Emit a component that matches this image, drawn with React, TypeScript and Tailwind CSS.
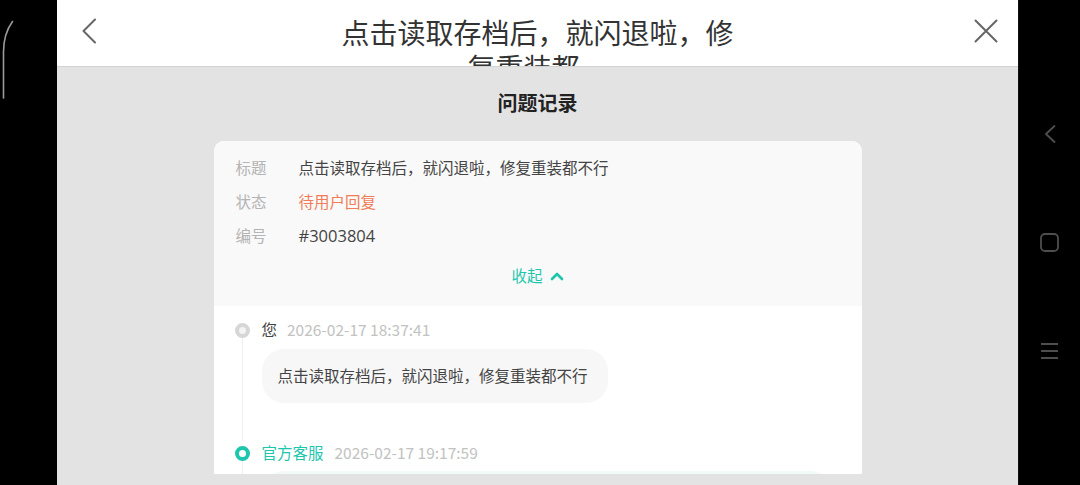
const font = { fontFamily: '"Noto Sans CJK SC", "Noto Sans", sans-serif' }

function BackIcon() {
  return (
    <svg width="16" height="26" viewBox="0 0 16 26" fill="none">
      <path d="M14 1.5 L2.5 13 L14 24.5" stroke="#666" strokeWidth="2" strokeLinecap="round" strokeLinejoin="round" />
    </svg>
  )
}

function CloseIcon() {
  return (
    <svg width="24" height="24" viewBox="0 0 24 24" fill="none">
      <path d="M1.5 1.5 L22.5 22.5 M22.5 1.5 L1.5 22.5" stroke="#666" strokeWidth="2" strokeLinecap="round" />
    </svg>
  )
}

function InfoRow({ label, value, tone }: { label: string; value: string; tone?: string }) {
  return (
    <div className="flex h-[34px] items-center text-[15.5px]">
      <span className="w-[63px] text-[#b4b4b4]">{label}</span>
      <span className={tone ?? "text-[#444]"}>{value}</span>
    </div>
  )
}

function Dot({ active }: { active?: boolean }) {
  return (
    <span
      className={
        active
          ? "block h-[15px] w-[15px] rounded-full border-[4.5px] border-[#1ec6ad] bg-white"
          : "block h-[15px] w-[15px] rounded-full border-[4.5px] border-[#d6d6d6] bg-[#f4f4f4]"
      }
    />
  )
}

export default function App() {
  return (
    <div className="flex h-[485px] w-[1080px] overflow-hidden bg-black" style={font}>
      {/* left edge */}
      <div className="w-[57px] shrink-0">
        <svg width="57" height="120" viewBox="0 0 57 120" fill="none">
          <path d="M3.5 98 L3.5 52 C3.5 40 7 29 12.5 21.5" stroke="#9a9a9a" strokeWidth="1.6" strokeLinecap="round" />
        </svg>
      </div>

      {/* app panel */}
      <div className="flex w-[961px] shrink-0 flex-col bg-[#e3e3e3]">
        <header className="flex h-[67px] shrink-0 items-start overflow-hidden border-b border-[#d2d2d2] bg-white">
          <div className="flex h-[62px] w-[90px] items-center pl-[24px]">
            <BackIcon />
          </div>
          <h1 className="flex-1 pt-[15px] text-center text-[28px] leading-[35px] text-[#333]">
            点击读取存档后，就闪退啦，修
            <br />
            复重装都…
          </h1>
          <div className="flex h-[62px] w-[90px] items-center justify-end pr-[20px]">
            <CloseIcon />
          </div>
        </header>

        <main className="flex h-[407px] shrink-0 flex-col items-center overflow-hidden pt-[22px]">
          <h2 className="text-[20px] font-bold leading-[28px] text-[#222]">问题记录</h2>

          <section className="mt-[24px] w-[648px] shrink-0 overflow-hidden rounded-[10px] bg-white">
            <div className="bg-[#f9f9f9] pb-[13px] pl-[22px] pt-[10px]">
              <InfoRow label="标题" value="点击读取存档后，就闪退啦，修复重装都不行" />
              <InfoRow label="状态" value="待用户回复" tone="text-[#f07d55]" />
              <div className="flex h-[34px] items-center text-[15.5px]">
                <span className="w-[63px] text-[#b4b4b4]">编号</span>
                <span className="text-[16.5px] text-[#444]" style={{ fontFamily: '"Open Sans", sans-serif' }}>
                  #3003804
                </span>
              </div>
              <div className="mt-[6px] flex h-[34px] items-center justify-center gap-[7px] pr-[22px] text-[15.5px] text-[#1ec6ad]">
                <span>收起</span>
                <svg width="14" height="10" viewBox="0 0 14 10" fill="none">
                  <path d="M2 8 L7 3 L12 8" stroke="#1ec6ad" strokeWidth="2.6" strokeLinecap="round" strokeLinejoin="round" />
                </svg>
              </div>
            </div>

            <div className="pl-[21px] pt-[12px]">
              <div className="flex">
                <div className="flex w-[16px] flex-col items-center pt-[4.5px]">
                  <Dot />
                  <span className="w-px flex-1 bg-[#efefef]" />
                </div>
                <div className="ml-[11px] pb-[38px]">
                  <div className="flex h-[24px] items-center text-[15.5px]">
                    <span className="text-[#444]">您</span>
                    <span className="ml-[10px] text-[#c2c2c2]">2026-02-17 18:37:41</span>
                  </div>
                  <div className="mt-[7px] flex h-[54px] w-[346px] items-center rounded-[22px] bg-[#f7f7f7] px-[16px] text-[15.5px] text-[#444]">
                    点击读取存档后，就闪退啦，修复重装都不行
                  </div>
                </div>
              </div>

              <div className="flex">
                <div className="flex w-[16px] flex-col items-center pt-[4.5px]">
                  <Dot active />
                  <span className="w-px flex-1 bg-[#efefef]" />
                </div>
                <div className="ml-[11px] pb-[20px]">
                  <div className="flex h-[24px] items-center text-[15.5px]">
                    <span className="text-[#1ec6ad]">官方客服</span>
                    <span className="ml-[11px] text-[#c2c2c2]">2026-02-17 19:17:59</span>
                  </div>
                  <div className="mt-[6px] h-[80px] w-[570px] rounded-[22px] bg-[#f2faf8]" />
                </div>
              </div>
            </div>
          </section>
        </main>
      </div>

      {/* system nav */}
      <nav className="flex w-[62px] shrink-0 flex-col items-center gap-[90px] border-l border-[#111] pt-[125px]">
        <svg width="12" height="18" viewBox="0 0 12 18" fill="none">
          <path d="M10.5 1 L2 9 L10.5 17" stroke="#4e4e4e" strokeWidth="1.8" strokeLinecap="round" strokeLinejoin="round" />
        </svg>
        <svg width="19" height="19" viewBox="0 0 19 19" fill="none">
          <rect x="1" y="1" width="17" height="17" rx="4" stroke="#4e4e4e" strokeWidth="1.8" />
        </svg>
        <svg width="19" height="18" viewBox="0 0 19 18" fill="none">
          <path d="M1 2 H18 M1 9 H18 M1 16 H18" stroke="#4e4e4e" strokeWidth="1.8" />
        </svg>
      </nav>
    </div>
  )
}
